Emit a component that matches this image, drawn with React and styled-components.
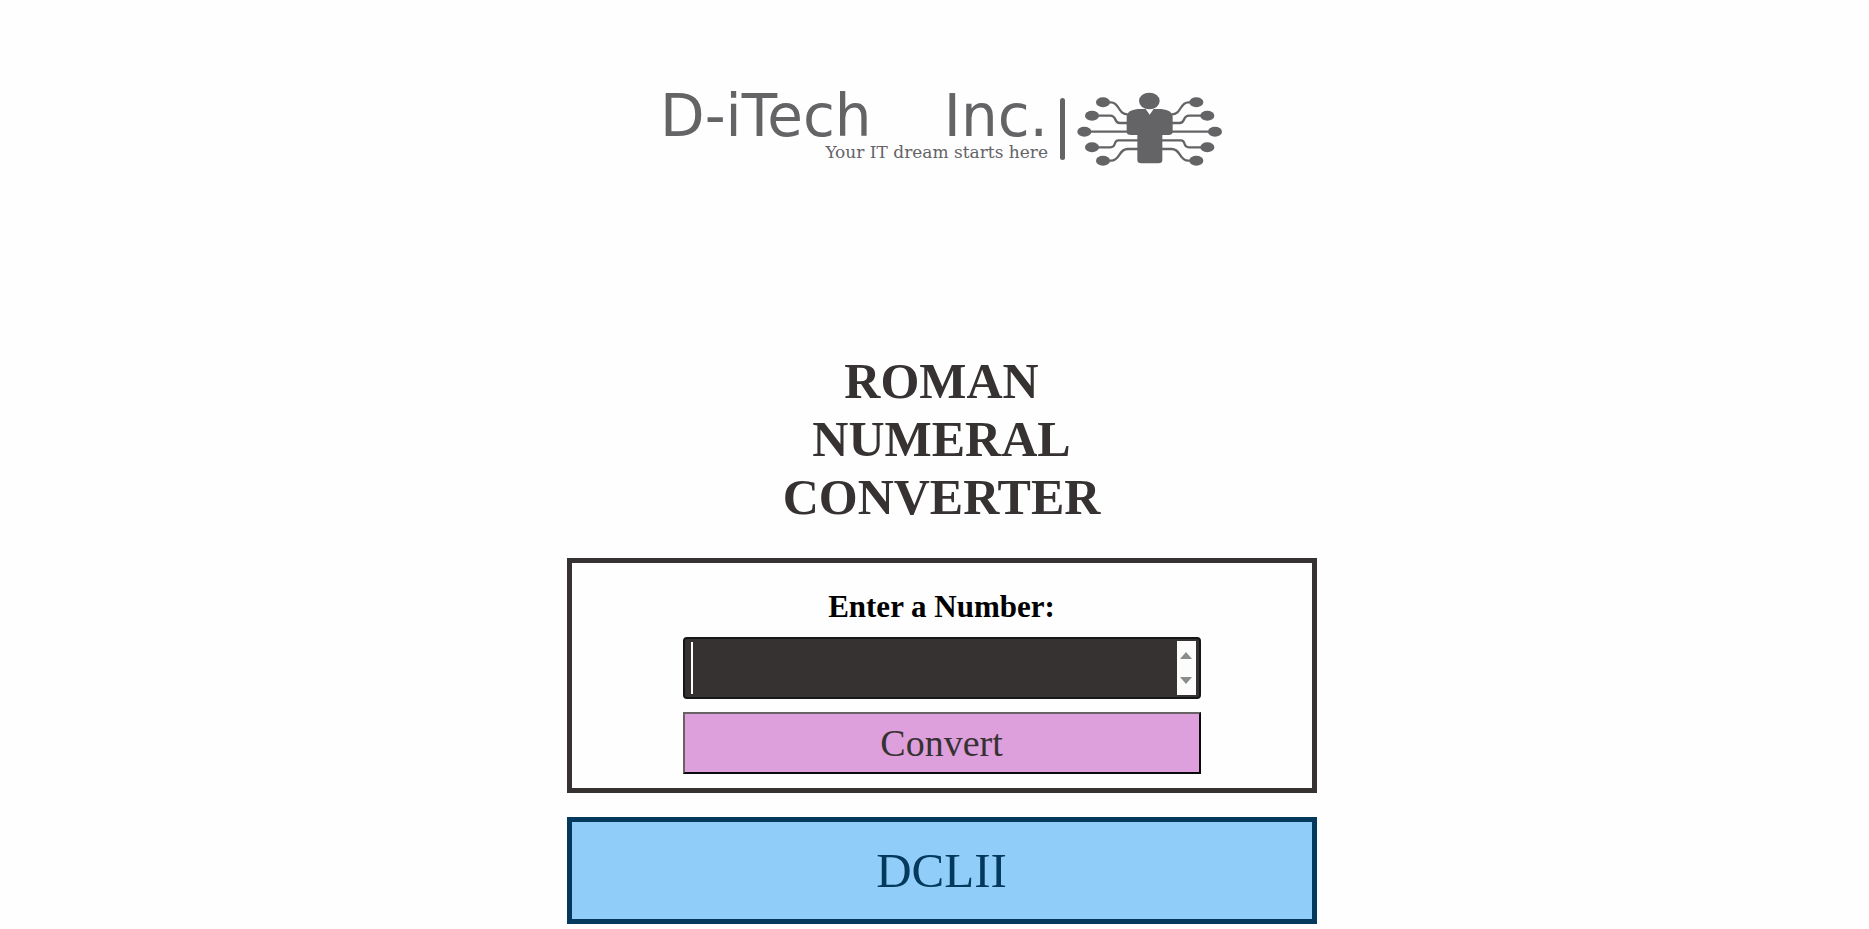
import React, { useState } from "react";
import styled, { createGlobalStyle } from "styled-components";

const ink = "#373232";
const logoGray = "#646466";
const serif = '"Liberation Serif", "Times New Roman", serif';

const GlobalStyle = createGlobalStyle`
  *, *::before, *::after { box-sizing: border-box; }
  body { margin: 0; background: #fefefe; font-family: ${serif}; }
`;

const Page = styled.main`
  display: flex;
  flex-direction: column;
  align-items: center;
  padding: 84px 0 4px 14px;
`;

const Logo = styled.a`
  display: flex;
  align-items: flex-start;
  gap: 12px;
  color: ${logoGray};
  text-decoration: none;
`;

const Brand = styled.div`
  display: flex;
  flex-direction: column;
  width: 388px;
  padding-top: 4px;
`;

const Wordmark = styled.div`
  display: flex;
  justify-content: space-between;
  font: 58px/56px "DejaVu Sans", sans-serif;
`;

const Tagline = styled.div`
  align-self: flex-end;
  font: 17px/16px "DejaVu Serif", serif;
  white-space: nowrap;
`;

const Divider = styled.div`
  width: 5px;
  height: 62px;
  margin-top: 14px;
  border-radius: 3px;
  background: ${logoGray};
`;

const Drawing = styled.svg`
  width: 146px;
  height: 74px;
  margin-top: 8px;
`;

const Title = styled.h1`
  max-width: 330px;
  margin: 186px 0 32px;
  color: ${ink};
  font-size: 50px;
  line-height: 58px;
  text-align: center;
`;

const Form = styled.form`
  display: flex;
  flex-direction: column;
  align-items: center;
  width: 750px;
  max-width: 100%;
  padding: 26px 0 14px;
  border: 5px solid ${ink};
`;

const Label = styled.label`
  margin-bottom: 12px;
  color: #000;
  font-size: 31px;
  line-height: 36px;
  font-weight: 700;
`;

const Field = styled.div`
  position: relative;
  display: flex;
  width: 70%;
  height: 62px;
  margin-bottom: 13px;
  padding: 2px 3px 2px 2px;
  border: 2px solid #161616;
  border-radius: 4px;
  background: ${ink};
`;

const NumberInput = styled.input`
  flex: 1;
  min-width: 0;
  padding: 0 4px;
  border: 0;
  outline: 0;
  background: transparent;
  color: #fff;
  font: 38px/44px ${serif};
  appearance: textfield;
  &::-webkit-inner-spin-button { appearance: none; }
  &:focus + span { display: none; }
`;

const Caret = styled.span`
  position: absolute;
  top: 3px;
  bottom: 3px;
  left: 6px;
  width: 2px;
  background: #fff;
`;

const Stepper = styled.div`
  display: flex;
  flex-direction: column;
  width: 19px;
  background: #fcfcfc;
`;

const StepButton = styled.button`
  display: flex;
  flex: 1;
  align-items: center;
  justify-content: center;
  padding: ${(p) => (p.$up ? "2px 0 0" : "0 0 2px")};
  border: 0;
  background: transparent;
`;

const Convert = styled.button`
  width: 70%;
  height: 62px;
  padding: 0;
  border: 2px solid;
  border-color: #676365 #0b090b #0b090b #676365;
  background: #dda0dd;
  color: ${ink};
  font: 38px/44px ${serif};
`;

const Result = styled.output`
  display: flex;
  align-items: center;
  justify-content: center;
  width: 750px;
  max-width: 100%;
  height: 107px;
  margin-top: 24px;
  border: 5px solid #04395e;
  background: #90cdf9;
  color: #04395e;
  font-size: 49px;
  line-height: 58px;
`;

function CircuitMan() {
  return (
    <Drawing viewBox="50 36 438 222" fill={logoGray} aria-hidden="true">
      <g fill="none" stroke={logoGray} strokeWidth="7">
        <path d="M128 67h24c26 0 20 36 50 36M408 67h-24c-26 0-20 36-50 36" />
        <path d="M95 107h55c20 0 10 22 28 22h24M441 107h-55c-20 0-10 22-28 22h-24" />
        <path d="M72 155h392" />
        <path d="M95 202h55c20 0 8-21 24-21h60M441 202h-55c-20 0-8-21-24-21h-60" />
        <path d="M128 242h24c28 0 22-35 50-35h34M408 242h-24c-28 0-22-35-50-35h-34" />
      </g>
      <ellipse cx="128" cy="67" rx="21" ry="15" />
      <ellipse cx="95" cy="107" rx="21" ry="15" />
      <ellipse cx="72" cy="155" rx="21" ry="15" />
      <ellipse cx="95" cy="202" rx="21" ry="15" />
      <ellipse cx="128" cy="242" rx="21" ry="15" />
      <ellipse cx="408" cy="67" rx="21" ry="15" />
      <ellipse cx="441" cy="107" rx="21" ry="15" />
      <ellipse cx="464" cy="155" rx="21" ry="15" />
      <ellipse cx="441" cy="202" rx="21" ry="15" />
      <ellipse cx="408" cy="242" rx="21" ry="15" />
      <ellipse cx="267" cy="63" rx="31" ry="25" />
      <path d="M232 87H256L268 104L280 87H303Q337 91 337 110V156Q337 165 324 165H306V240Q306 250 294 250H243Q231 250 231 240V165H212Q199 165 199 156V110Q199 91 232 87Z" />
    </Drawing>
  );
}

const numerals = [
  [1000, "M"], [900, "CM"], [500, "D"], [400, "CD"], [100, "C"], [90, "XC"],
  [50, "L"], [40, "XL"], [10, "X"], [9, "IX"], [5, "V"], [4, "IV"], [1, "I"],
];

function toRoman(number) {
  let rest = number;
  let text = "";
  for (const [value, sign] of numerals) {
    while (rest >= value) {
      text += sign;
      rest -= value;
    }
  }
  return text;
}

export default function App() {
  const [value, setValue] = useState("");
  const [result, setResult] = useState(toRoman(652));
  const step = (by) => setValue(String(Math.max(0, Number(value) + by)));
  const submit = (event) => {
    event.preventDefault();
    const number = Number(value);
    if (number > 0 && number < 4000) setResult(toRoman(Math.floor(number)));
    setValue("");
  };

  return (
    <>
      <GlobalStyle />
      <Page>
        <Logo href="#">
          <Brand>
            <Wordmark><span>D-iTech</span><span>Inc.</span></Wordmark>
            <Tagline>Your IT dream starts here</Tagline>
          </Brand>
          <Divider />
          <CircuitMan />
        </Logo>
        <Title>ROMAN NUMERAL CONVERTER</Title>
        <Form onSubmit={submit}>
          <Label htmlFor="number">Enter a Number:</Label>
          <Field>
            <NumberInput id="number" type="number" value={value} onChange={(e) => setValue(e.target.value)} />
            {value === "" && <Caret />}
            <Stepper>
              <StepButton $up type="button" aria-label="Increase" onClick={() => step(1)}>
                <svg width="12" height="7" viewBox="0 0 12 7"><path d="M0 7 6 0l6 7z" fill="#8b8b8b" /></svg>
              </StepButton>
              <StepButton type="button" aria-label="Decrease" onClick={() => step(-1)}>
                <svg width="12" height="7" viewBox="0 0 12 7"><path d="M0 0h12L6 7z" fill="#8b8b8b" /></svg>
              </StepButton>
            </Stepper>
          </Field>
          <Convert type="submit">Convert</Convert>
        </Form>
        <Result htmlFor="number">{result}</Result>
      </Page>
    </>
  );
}
